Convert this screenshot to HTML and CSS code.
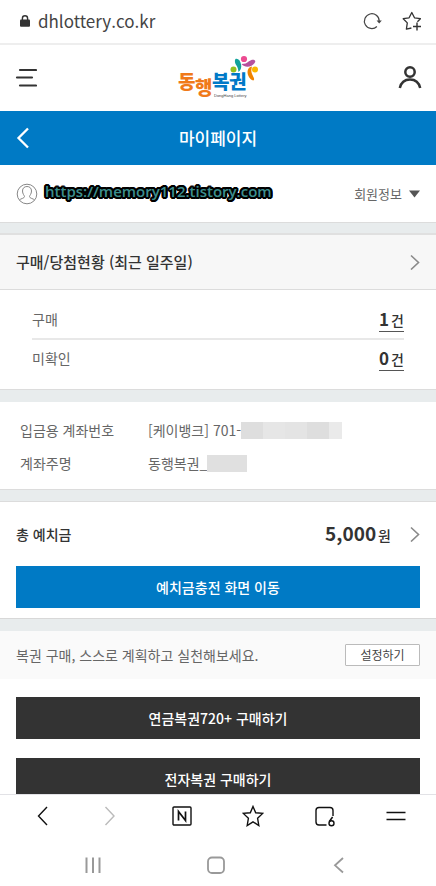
FILE: index.html
```html
<!DOCTYPE html>
<html lang="ko">
<head>
<meta charset="utf-8">
<meta name="viewport" content="width=device-width, initial-scale=1">
<title>마이페이지</title>
<link rel="stylesheet" href="styles.css">
</head>
<body>
<div class="address-bar">
  <svg class="lock" width="10" height="12" viewBox="0 0 10 12" aria-hidden="true"><path d="M2.4 5V3.4a2.6 2.6 0 0 1 5.2 0V5" fill="none" stroke="#333" stroke-width="1.4"/><rect y="4.4" width="10" height="7.4" rx="1" fill="#333"/></svg>
  <span class="address">dhlottery.co.kr</span>
  <button class="icon-button" type="button" aria-label="새로고침"><svg width="20" height="20" viewBox="0 0 20 20"><path d="M14.9 15.5A7.4 7.4 0 1 1 17.2 10.2" fill="none" stroke="#444" stroke-width="1.2"/><path d="M14.6 9.6h5.2l-2.6 2.8z" fill="#444"/></svg></button>
  <button class="icon-button" type="button" aria-label="북마크 추가"><svg width="20" height="20" viewBox="0 0 20 20"><path d="M9.400 17l-5 1.200.9-6.300L1.200 7.700l5.900-.9L9.800 1.500l2.700 5.300 5.900.9-3 3" fill="none" stroke="#333" stroke-width="1.300" stroke-linejoin="round"/><path d="M15 11.500v8M11 15.500h8" stroke="#333" stroke-width="1.400"/></svg></button>
</div>

<header class="site-header">
  <button class="icon-button" type="button" aria-label="메뉴"><svg width="22" height="20" viewBox="0 0 22 20"><path d="M5 2h16M2 9.500h15M5 17.500h16" stroke="#333" stroke-width="2.200" stroke-linecap="round"/></svg></button>
  <a class="logo" href="#" aria-label="동행복권">
    <svg width="80" height="46" viewBox="0 0 80 46">
      <g class="logo-name">
        <text class="logo-orange" x="0" y="34">동</text>
        <text class="logo-orange" x="17" y="40">행</text>
        <text class="logo-blue" x="34" y="34">복</text>
        <text class="logo-blue" x="51" y="34">권</text>
      </g>
      <text class="logo-sub" x="36" y="42">DongHang Lottery</text>
      <g transform="translate(5 0)">
        <circle cx="61" cy="4" r="3.100" fill="#ec4b91"/>
        <circle cx="50.500" cy="14.500" r="3" fill="#95c11f"/>
        <circle cx="72" cy="14.500" r="3" fill="#fbb800"/>
        <path d="M52.400 4c2.500-1 5 1.500 5.700 5.500.6 3-.4 6-2.600 7.500-.4-3-.6-4.500-2-6.500-1.500-1.800-2.200-4.500-1.100-6.500z" fill="#11a29b"/>
        <path d="M58.500 9c3.500 0 5-.5 7.500-2.700 2.300-1.900 5.500-2.100 6.200-.3.400 1.300-1.200 3.400-3.700 4.700-3.500 1.700-7.500 1.300-10-1.700z" fill="#b5519d"/>
        <path d="M69 11.500c-2.800.3-4.500 2.500-4.500 5.500.1 3.600 2.200 7 5 8.300 1.300.6 2-.8 1.400-2.300-1.200-2.800-2.500-4.700-2.600-7.200 0-1.600.5-2.900.7-4.300z" fill="#f08300"/>
      </g>
    </svg>
  </a>
  <button class="icon-button" type="button" aria-label="내 정보"><svg width="24" height="24" viewBox="0 0 24 24"><g fill="none" stroke="#333" stroke-width="2.500"><circle cx="12" cy="6" r="4.700"/><path d="M1.800 22C3 16.500 7 13.400 12 13.400s9 3.100 10.200 8.600"/></g></svg></button>
</header>

<div class="page-title">
  <button class="icon-button" type="button" aria-label="뒤로"><svg width="16" height="22" viewBox="0 0 16 22"><path d="M12 1.500L2.500 11l9.500 9.500" fill="none" stroke="#fff" stroke-width="2.300"/></svg></button>
  <h1>마이페이지</h1>
</div>

<main class="content">
  <section class="member">
    <svg width="22" height="22" viewBox="0 0 22 22" aria-hidden="true"><g fill="none" stroke="#888" stroke-width="1"><circle cx="11" cy="11" r="9.800"/><path d="M3.500 17c1-1.500 5-1.500 5-3.500 0-.8-2-2.500-2-5.500C6.500 5 8.500 3.500 11 3.500S15.500 5 15.500 8c0 3-2 4.700-2 5.500 0 2 4 2 5 3.500"/></g></svg>
    <span class="member-name">https://memory112.tistory.com</span>
    <button class="member-info" type="button">회원정보<svg width="12" height="8" viewBox="0 0 12 8" aria-hidden="true"><path d="M1 .500h11L6.500 7.500z" fill="#555"/></svg></button>
  </section>

  <section class="status">
    <a class="status-head" href="#">
      <h2>구매/당첨현황 (최근 일주일)</h2>
      <svg width="12" height="16" viewBox="0 0 12 16" aria-hidden="true"><path d="M3 1.500L10.500 8.500 3 15.500" fill="none" stroke="#8a8a8a" stroke-width="1.600"/></svg>
    </a>
    <dl class="status-list">
      <div class="status-row"><dt>구매</dt><dd><a href="#">1<small>건</small></a></dd></div>
      <div class="status-row"><dt>미확인</dt><dd><a href="#">0<small>건</small></a></dd></div>
    </dl>
  </section>

  <dl class="account">
    <dt>입금용 계좌번호</dt>
    <dd>[케이뱅크] 701-<span class="mask mask-number"></span></dd>
    <dt>계좌주명</dt>
    <dd>동행복권_<span class="mask mask-owner"></span></dd>
  </dl>

  <section class="deposit">
    <a class="deposit-total" href="#">
      <h2>총 예치금</h2>
      <span class="amount">5,000<small>원</small></span>
      <svg width="12" height="16" viewBox="0 0 12 16" aria-hidden="true"><path d="M3 1.500L10.500 8.500 3 15.500" fill="none" stroke="#8a8a8a" stroke-width="1.600"/></svg>
    </a>
    <button class="action action-blue" type="button">예치금충전 화면 이동</button>
  </section>

  <section class="plan">
    <p>복권 구매, 스스로 계획하고 실천해보세요.</p>
    <button class="plan-button" type="button">설정하기</button>
  </section>

  <section class="purchase">
    <button class="action action-dark" type="button">연금복권720+ 구매하기</button>
    <button class="action action-dark" type="button">전자복권 구매하기</button>
  </section>
</main>

<nav class="browser-nav" aria-label="브라우저">
  <button class="icon-button" type="button" aria-label="이전"><svg width="22" height="22" viewBox="0 0 22 22"><path d="M19 2l-8.500 9 8.500 9" fill="none" stroke="#111" stroke-width="1.400"/></svg></button>
  <button class="icon-button" type="button" aria-label="다음"><svg width="22" height="22" viewBox="0 0 22 22"><path d="M6.500 2L15 11l-8.500 9" fill="none" stroke="#bbb" stroke-width="1.400"/></svg></button>
  <button class="icon-button" type="button" aria-label="홈"><svg width="22" height="22" viewBox="0 0 22 22"><rect x="2" y="2" width="18" height="18" rx="1" fill="none" stroke="#111" stroke-width="1.400"/><path d="M7.500 15.500v-9l7 9v-9" fill="none" stroke="#111" stroke-width="1.700"/></svg></button>
  <button class="icon-button" type="button" aria-label="북마크"><svg width="22" height="22" viewBox="0 0 22 22"><path d="M11 1.500l2.700 6.300 7 .6-5.100 4.900 1.200 7.200L11 16.800l-5.800 3.700 1.200-7.200L1.300 8.400l7-.6z" fill="none" stroke="#111" stroke-width="1.400"/></svg></button>
  <button class="icon-button" type="button" aria-label="탭 6개"><svg width="22" height="22" viewBox="0 0 22 22"><path d="M12.500 20H5a3 3 0 0 1-3-3V5.500a3 3 0 0 1 3-3h11a3 3 0 0 1 3 3V11" fill="none" stroke="#111" stroke-width="1.400"/><path d="M18.600 12l-3.300 4.500" fill="none" stroke="#111" stroke-width="1.500"/><circle cx="17.500" cy="18.200" r="2.500" fill="none" stroke="#111" stroke-width="1.400"/></svg></button>
  <button class="icon-button" type="button" aria-label="더보기"><svg width="22" height="22" viewBox="0 0 22 22"><path d="M1.500 7.500h19M1.500 14.500h19" stroke="#111" stroke-width="1.400"/></svg></button>
</nav>

<nav class="system-nav" aria-label="시스템">
  <button class="icon-button" type="button" aria-label="최근 앱"><svg width="20" height="20" viewBox="0 0 20 20"><path d="M3.500 2.500v15.500M10 2.500v15.500M16.500 2.500v15.500" stroke="#999" stroke-width="2"/></svg></button>
  <button class="icon-button" type="button" aria-label="홈 화면"><svg width="20" height="20" viewBox="0 0 20 20"><rect x="2" y="2.500" width="16" height="15.500" rx="4" fill="none" stroke="#999" stroke-width="1.800"/></svg></button>
  <button class="icon-button" type="button" aria-label="돌아가기"><svg width="20" height="20" viewBox="0 0 20 20"><path d="M14 3l-8 7.300 8 7.200" fill="none" stroke="#999" stroke-width="1.800"/></svg></button>
</nav>
</body>
</html>
```
FILE: styles.css
```css
* {
  box-sizing: border-box;
}

body {
  display: flex;
  flex-direction: column;
  height: 100vh;
  margin: 0;
  overflow: hidden;
  background: #fff;
  color: #333;
  font: 14px/20px "Noto Sans CJK KR", sans-serif;
}

h1, h2, p, dl, dd {
  margin: 0;
}

a {
  color: inherit;
  text-decoration: none;
}

button {
  padding: 0;
  border: 0;
  background: none;
  color: inherit;
  font: inherit;
}

svg {
  display: block;
  flex: none;
}

.icon-button {
  display: flex;
}

.address-bar {
  display: flex;
  flex: none;
  align-items: center;
  gap: 20px;
  height: 45px;
  padding: 0 14px 2px 20px;
  border-bottom: 2px solid #eee;
}

.address {
  flex: 1;
  margin-left: -12px;
  color: #444;
  font-size: 17px;
}

.site-header {
  display: flex;
  flex: none;
  align-items: center;
  justify-content: space-between;
  height: 66px;
  padding: 0 14px 0 15px;
}

.logo-name {
  font-size: 19px;
  font-weight: 900;
}

.logo-orange {
  fill: #f07a1a;
}

.logo-blue {
  fill: #0079c7;
}

.logo-sub {
  fill: #444;
  font: 4px "Liberation Sans", sans-serif;
}

.page-title {
  display: grid;
  flex: none;
  grid-template-columns: 16px 1fr 16px;
  align-items: center;
  height: 54px;
  padding: 0 16px;
  background: #007ac5;
  color: #fff;
}

.page-title h1 {
  font-size: 17px;
  font-weight: 500;
  text-align: center;
}

.content {
  display: flex;
  flex: 1;
  flex-direction: column;
  min-height: 0;
  overflow: hidden;
  background: #e8eced;
}

.content > * {
  flex: none;
}

.member {
  display: flex;
  align-items: center;
  gap: 7px;
  height: 58px;
  padding: 0 16px;
  border-bottom: 1px solid #dcdcdc;
  background: #fff;
}

.member-name {
  flex: 1;
  padding-bottom: 6px;
  color: #3c8f8f;
  font: 600 15px/20px "Open Sans", sans-serif;
  text-shadow: 2px 0 #000, -2px 0 #000, 0 2px #000, 0 -2px #000, 1px 1px #000, -1px 1px #000, 1px -1px #000, -1px -1px #000, 2px 1px #000, -2px 1px #000, 2px -1px #000, -2px -1px #000, 1px 2px #000, -1px 2px #000, 1px -2px #000, -1px -2px #000;
}

.member-info {
  display: flex;
  align-items: center;
  gap: 6px;
  color: #666;
  font-size: 13px;
}

.status {
  margin-top: 10px;
  border-top: 2px solid #e0e0e0;
  border-bottom: 1px solid #dcdcdc;
  background: #fff;
}

.status-head {
  display: flex;
  align-items: center;
  justify-content: space-between;
  height: 55px;
  padding: 0 16px;
  border-bottom: 1px solid #dcdcdc;
  background: #f7f7f7;
}

.status-head h2 {
  font-size: 15px;
  font-weight: 500;
}

.status-list {
  padding: 10px 32px 13px;
  color: #666;
}

.status-row {
  display: flex;
  align-items: center;
  justify-content: space-between;
  height: 38px;
}

.status-row + .status-row {
  border-top: 2px solid #e8e8e8;
}

.status-row a {
  border-bottom: 1px solid #555;
  color: #333;
  font-size: 17px;
  font-weight: 700;
}

.status-row small,
.amount small {
  margin-left: 2px;
  font-size: 14px;
  font-weight: 500;
}

.account {
  display: grid;
  grid-template-columns: 128px 1fr;
  row-gap: 13px;
  margin-top: 12px;
  padding: 18px 20px 16px;
  border-bottom: 1px solid #dcdcdc;
  background: #fff;
  color: #666;
}

.account dd {
  display: flex;
  align-items: center;
}

.mask {
  height: 17px;
  background: #e0e0e0;
}

.mask-number {
  width: 101px;
  background: linear-gradient(90deg, #dedede 22px, #e6e6e6 22px 44px, #e4e4e4 44px 66px, #dedede 66px 88px, #eaeaea 88px);
}

.mask-owner {
  width: 40px;
}

.deposit {
  margin-top: 11px;
  padding: 0 16px 10px;
  border-top: 1px solid #dcdcdc;
  border-bottom: 1px solid #d8d8d8;
  background: #fff;
}

.deposit-total {
  display: flex;
  align-items: center;
  height: 64px;
}

.deposit-total h2 {
  flex: 1;
  font-size: 14px;
  font-weight: 500;
}

.amount {
  margin-right: 17px;
  font-size: 19px;
  font-weight: 700;
}

.action {
  display: block;
  width: 100%;
  height: 42px;
  color: #fff;
  font-weight: 500;
}

.action-blue {
  background: #007ac5;
}

.action-dark {
  background: #333;
}

.plan {
  display: flex;
  align-items: center;
  justify-content: space-between;
  height: 48px;
  margin-top: 12px;
  padding: 0 16px;
  background: #fafafa;
  color: #666;
}

.plan-button {
  width: 75px;
  height: 22px;
  border: 1px solid #bbb;
  border-radius: 1px;
  background: #fff;
  color: #444;
  font-size: 12px;
  line-height: 18px;
}

.purchase {
  display: grid;
  gap: 19px;
  padding: 18px 16px;
  background: #fff;
}

.browser-nav {
  display: flex;
  flex: none;
  justify-content: space-between;
  padding: 10px 29px 10px 28px;
  border-top: 1px solid #e2e2e6;
}

.system-nav {
  display: flex;
  flex: none;
  justify-content: space-between;
  padding: 18px 87px 11px 83px;
}
```
